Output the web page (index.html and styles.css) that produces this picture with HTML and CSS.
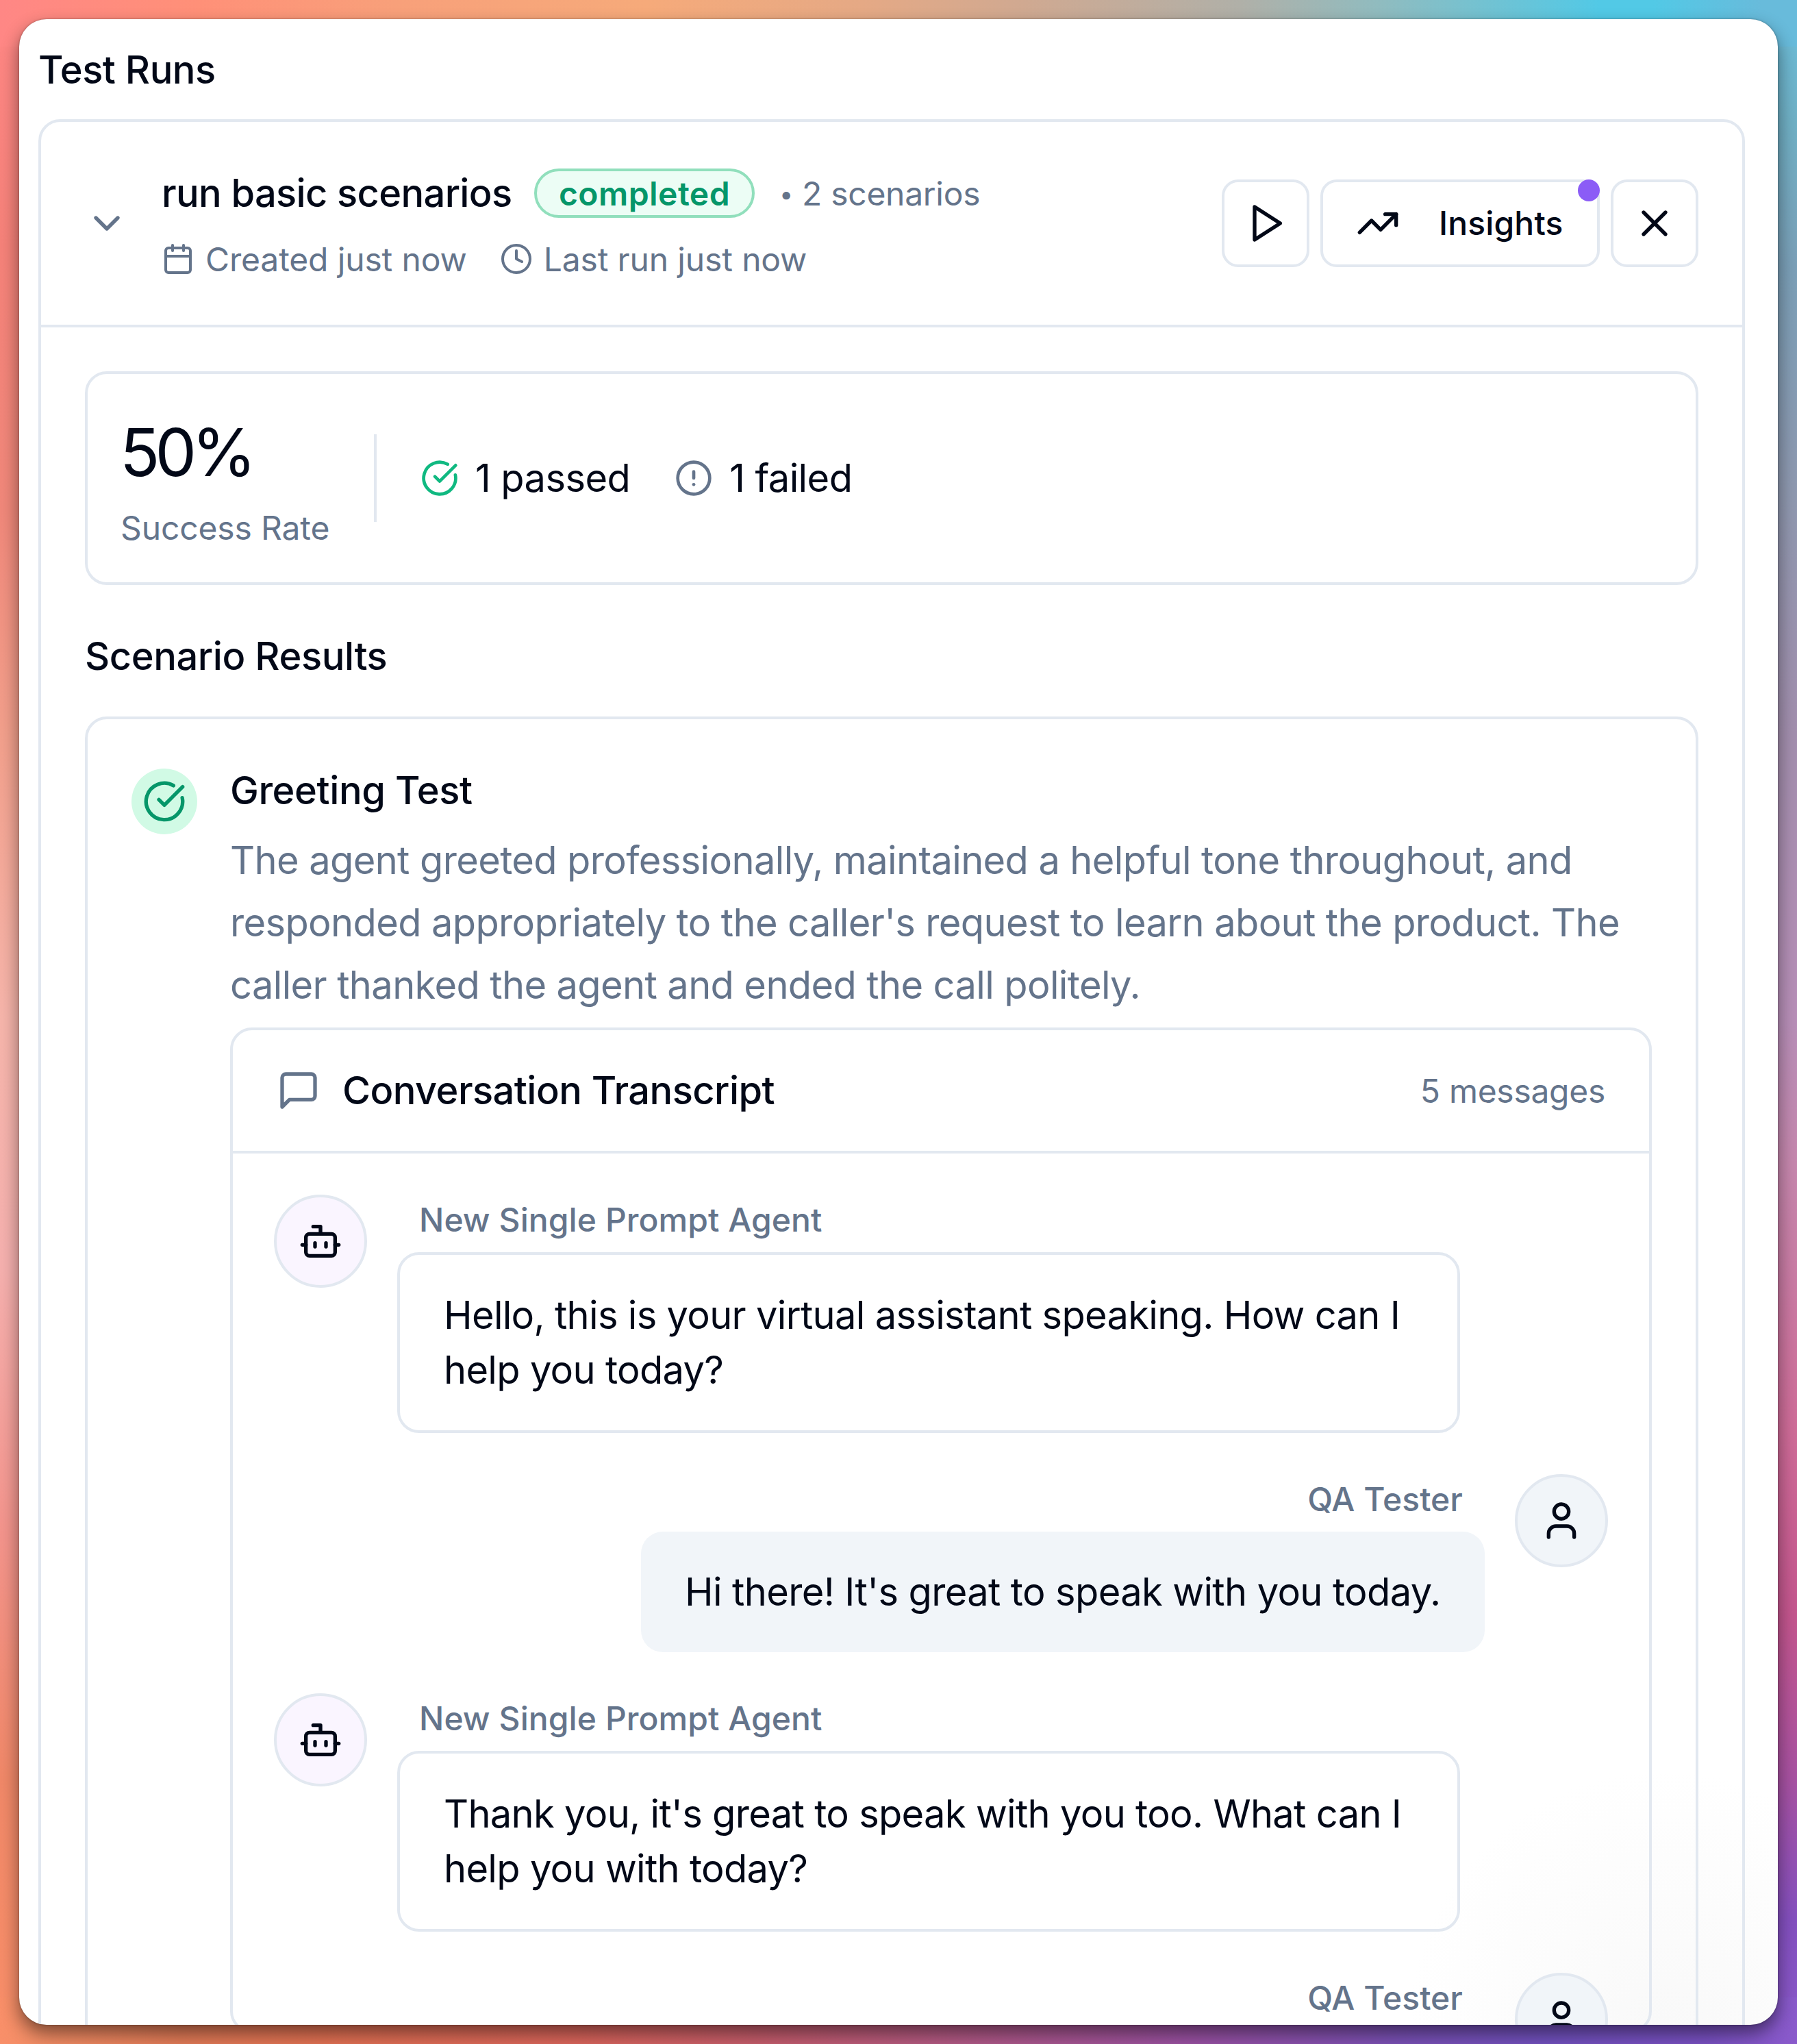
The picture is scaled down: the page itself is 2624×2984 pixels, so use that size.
FILE: index.html
```html
<!DOCTYPE html>
<html lang="en">
<head>
<meta charset="utf-8">
<title>Test Runs</title>
<link rel="stylesheet" href="styles.css">
</head>
<body>
<svg class="sprite" aria-hidden="true">
  <symbol id="chevron-down" viewBox="0 0 24 24"><path d="m6 9 6 6 6-6"/></symbol>
  <symbol id="calendar" viewBox="0 0 24 24"><path d="M8 2v4"/><path d="M16 2v4"/><rect width="18" height="18" x="3" y="4" rx="2"/><path d="M3 10h18"/></symbol>
  <symbol id="clock" viewBox="0 0 24 24"><circle cx="12" cy="12" r="10"/><path d="M12 6v6l4 2"/></symbol>
  <symbol id="play" viewBox="0 0 24 24"><path d="M6 3 20 12 6 21Z"/></symbol>
  <symbol id="trending-up" viewBox="0 0 24 24"><path d="M22 7 13.5 15.5 8.5 10.5 2 17"/><path d="M16 7h6v6"/></symbol>
  <symbol id="x" viewBox="0 0 24 24"><path d="M18 6 6 18"/><path d="m6 6 12 12"/></symbol>
  <symbol id="circle-check" viewBox="0 0 24 24"><path d="M21.801 10A10 10 0 1 1 17 3.335"/><path d="m9 11 3 3L22 4"/></symbol>
  <symbol id="circle-alert" viewBox="0 0 24 24"><circle cx="12" cy="12" r="10"/><path d="M12 8v4"/><path d="M12 16h.01"/></symbol>
  <symbol id="message-square" viewBox="0 0 24 24"><path d="M21 15a2 2 0 0 1-2 2H7l-4 4V5a2 2 0 0 1 2-2h14a2 2 0 0 1 2 2z"/></symbol>
  <symbol id="bot" viewBox="0 0 24 24"><path d="M12 8V4H8"/><rect width="16" height="12" x="4" y="8" rx="2"/><path d="M2 14h2"/><path d="M20 14h2"/><path d="M15 13v2"/><path d="M9 13v2"/></symbol>
  <symbol id="user" viewBox="0 0 24 24"><path d="M19 21v-2a4 4 0 0 0-4-4H9a4 4 0 0 0-4 4v2"/><circle cx="12" cy="7" r="4"/></symbol>
</svg>

<main class="window">
  <h1 class="page-title">Test Runs</h1>

  <section class="run">
    <header class="run-header">
      <svg class="icon muted"><use href="#chevron-down"/></svg>
      <div class="run-info">
        <div class="run-line">
          <h2 class="run-name">run basic scenarios</h2>
          <span class="badge">completed</span>
          <span class="run-count"><span class="bullet">•</span>2 scenarios</span>
        </div>
        <div class="run-meta">
          <span class="meta"><svg class="icon icon-sm"><use href="#calendar"/></svg>Created just now</span>
          <span class="meta"><svg class="icon icon-sm"><use href="#clock"/></svg>Last run just now</span>
        </div>
      </div>
      <div class="actions">
        <button class="button"><svg class="icon"><use href="#play"/></svg></button>
        <button class="button button-wide"><svg class="icon"><use href="#trending-up"/></svg>Insights<span class="dot"></span></button>
        <button class="button"><svg class="icon"><use href="#x"/></svg></button>
      </div>
    </header>

    <div class="run-body">
      <div class="stats">
        <div class="rate">
          <div class="rate-value">50%</div>
          <div class="rate-label">Success Rate</div>
        </div>
        <div class="divider"></div>
        <div class="counts">
          <div class="count"><svg class="icon icon-md passed"><use href="#circle-check"/></svg>1 passed</div>
          <div class="count"><svg class="icon icon-md muted"><use href="#circle-alert"/></svg>1 failed</div>
        </div>
      </div>

      <h3 class="section-title">Scenario Results</h3>

      <article class="result">
        <div class="status"><svg class="icon"><use href="#circle-check"/></svg></div>
        <div class="result-body">
          <h4 class="result-title">Greeting Test</h4>
          <p class="result-text">The agent greeted professionally, maintained a helpful tone throughout, and<br>responded appropriately to the caller's request to learn about the product. The<br>caller thanked the agent and ended the call politely.</p>

          <section class="transcript">
            <header class="transcript-header">
              <svg class="icon muted"><use href="#message-square"/></svg>
              <h5 class="transcript-title">Conversation Transcript</h5>
              <span class="transcript-count">5 messages</span>
            </header>
            <div class="messages">
              <div class="message">
                <div class="avatar agent"><svg class="icon"><use href="#bot"/></svg></div>
                <div class="content">
                  <div class="author">New Single Prompt Agent</div>
                  <div class="bubble">Hello, this is your virtual assistant speaking. How can I<br>help you today?</div>
                </div>
              </div>
              <div class="message own">
                <div class="avatar"><svg class="icon"><use href="#user"/></svg></div>
                <div class="content">
                  <div class="author">QA Tester</div>
                  <div class="bubble">Hi there! It's great to speak with you today.</div>
                </div>
              </div>
              <div class="message">
                <div class="avatar agent"><svg class="icon"><use href="#bot"/></svg></div>
                <div class="content">
                  <div class="author">New Single Prompt Agent</div>
                  <div class="bubble">Thank you, it's great to speak with you too. What can I<br>help you with today?</div>
                </div>
              </div>
              <div class="message own">
                <div class="avatar"><svg class="icon"><use href="#user"/></svg></div>
                <div class="content">
                  <div class="author">QA Tester</div>
                </div>
              </div>
            </div>
          </section>
        </div>
      </article>
    </div>
  </section>
</main>
</body>
</html>
```
FILE: styles.css
```css
* { box-sizing: border-box; }

html, body { height: 2984px; margin: 0; overflow: hidden; }

body {
  padding: 28px;
  font-family: Inter, "Liberation Sans", sans-serif;
  font-size: 56px;
  font-weight: 400;
  line-height: 80px;
  color: #020817;
  background:
    linear-gradient(90deg, #ff8785 0, #ff9078 11%, #f8a07a 22%, #f6aa7a 36%, #e5a985 48%, #d0a991 57%, #b0b0a8 69%, #8fbcc0 77%, #52c9e6 89%, #52c9e6 92%, #68bbdb 98%) 0 0 / 100% 68px no-repeat,
    linear-gradient(90deg, #f98f69 0, #f08c64 2%, #e07a56 10%, #e07052 18%, #d8645a 32%, #c45c6a 42%, #b05882 53%, #9850a0 66%, #7850b4 78%, #7050bc 86%, #7850c0 95%, #8a5acb 100%) 0 100% / 100% 68px no-repeat,
    linear-gradient(180deg, #ff8785 0, #f58279 12%, #f0887a 25%, #f2a08c 36%, #f6b5ab 50%, #f5b0ae 62%, #f3948c 75%, #f08868 87%, #f98f69 100%) 0 0 / 28px 100% no-repeat,
    linear-gradient(180deg, #6bbfdc 0, #70b0c5 6%, #7ba0b8 13%, #8f99b0 24%, #a38fae 36%, #b88fb8 50%, #c687ad 57%, #cf6c98 70%, #c4568e 79%, #a852a2 87%, #8450c0 94%, #8a5acb 100%) 100% 0 / 28px 100% no-repeat;
}

h1, h2, h3, h4, h5, p { margin: 0; font-size: 56px; font-weight: 500; }

.sprite { display: none; }

.icon {
  flex: none;
  width: 64px;
  height: 64px;
  fill: none;
  stroke: currentColor;
  stroke-width: 2;
  stroke-linecap: round;
  stroke-linejoin: round;
}
.icon-sm { width: 48px; height: 48px; margin-top: -2px; }
.icon-md { width: 56px; height: 56px; }
.muted { color: #64748b; }
.passed { color: #10b981; }

.window {
  height: 2928px;
  padding: 34px 48px 0 28px;
  overflow: hidden;
  border-radius: 40px;
  background: radial-gradient(circle 370px at 2400px 2928px, #f9f9f9, #fff) #fff;
  box-shadow: 0 12px 26px rgba(0, 0, 0, .48), 0 0 3px rgba(0, 0, 0, .35);
}

.page-title { letter-spacing: -.0085em; }

.run {
  margin-top: 32px;
  border: 4px solid #e2e8f0;
  border-radius: 32px;
}

.run-header {
  display: flex;
  align-items: center;
  gap: 48px;
  padding: 64px;
  border-bottom: 4px solid #e2e8f0;
}
.run-info { flex: 1; }
.run-line { display: flex; align-items: center; gap: 32px; }
.run-name { width: 512px; white-space: nowrap; letter-spacing: -.0115em; }
.badge {
  width: 322px;
  padding: 1px 0 0;
  border: 4px solid #91dfbc;
  border-radius: 36px;
  background: #ecfdf5;
  color: #059669;
  font-size: 48px;
  font-weight: 600;
  line-height: 63px;
  letter-spacing: .0095em;
  text-align: center;
}
.run-count { display: flex; gap: 14px; padding: 2px 0 0 1px; color: #64748b; font-size: 48px; line-height: 64px; letter-spacing: -.006em; }
.bullet { width: 22px; padding-left: 3px; font-size: 36px; }
.run-meta { display: flex; gap: 48px; margin-top: 24px; color: #64748b; font-size: 48px; line-height: 64px; letter-spacing: -.003em; }
.meta { display: flex; align-items: center; gap: 16px; padding-top: 1px; margin-bottom: -1px; }

.actions { display: flex; gap: 16px; }
.button {
  position: relative;
  display: flex;
  align-items: center;
  justify-content: center;
  width: 128px;
  height: 128px;
  padding: 0;
  border: 4px solid #e2e8f0;
  border-radius: 24px;
  background: #fff;
  color: inherit;
  font: 500 48px/64px Inter, "Liberation Sans", sans-serif;
}
.button-wide { gap: 57px; justify-content: flex-start; width: 408px; padding: 0 0 0 48px; letter-spacing: .003em; }
.dot {
  position: absolute;
  top: -4px;
  right: -4px;
  width: 32px;
  height: 32px;
  border-radius: 50%;
  background: #8b5cf6;
}

.run-body { padding: 64px; }

.stats {
  display: flex;
  align-items: center;
  gap: 64px;
  padding: 48px;
  border: 4px solid #e2e8f0;
  border-radius: 32px;
}
.rate { width: 306px; white-space: nowrap; }
.rate-value { margin-left: -1px; padding-top: 2px; font-size: 96px; line-height: 128px; letter-spacing: -.072em; }
.rate-label { margin: 15px 0 -1px; color: #64748b; font-size: 48px; line-height: 64px; letter-spacing: -.003em; }
.divider { width: 4px; height: 128px; background: #e2e8f0; }
.counts { display: flex; gap: 65px; }
.count { display: flex; align-items: center; gap: 24px; letter-spacing: -.0105em; }

.section-title { margin: 64px 0 48px; letter-spacing: -.0075em; }

.result {
  display: flex;
  align-items: flex-start;
  gap: 48px;
  padding: 64px;
  border: 4px solid #e2e8f0;
  border-radius: 32px;
}
.status {
  display: flex;
  align-items: center;
  justify-content: center;
  width: 96px;
  height: 96px;
  margin-top: 8px;
  border-radius: 50%;
  background: #d1fae5;
  color: #059669;
}
.result-body { flex: 1; }
.result-title { letter-spacing: -.0075em; }
.result-text {
  margin: 17px 0 16px;
  color: #64748b;
  font-weight: 400;
  line-height: 91px;
  letter-spacing: -.0113em;
  white-space: nowrap;
}

.transcript { border: 4px solid #e2e8f0; border-radius: 32px; overflow: hidden; }
.transcript-header {
  display: flex;
  align-items: center;
  gap: 32px;
  padding: 48px 64px;
  border-bottom: 4px solid #e2e8f0;
}
.transcript-title { flex: 1; letter-spacing: -.01em; }
.transcript-count { padding-top: 1px; color: #64748b; font-size: 48px; line-height: 64px; letter-spacing: -.006em; }

.messages {
  display: flex;
  flex-direction: column;
  gap: 60px;
  height: 1280px;
  padding: 60px;
  overflow: hidden;
}
.message { display: flex; flex: none; align-items: flex-start; gap: 44px; }
.own { flex-direction: row-reverse; }
.avatar {
  display: flex;
  flex: none;
  align-items: center;
  justify-content: center;
  width: 136px;
  height: 136px;
  border: 4px solid #e2e8f0;
  border-radius: 50%;
  background: #f1f5f9;
}
.agent { background: #faf5ff; }
.content { display: flex; flex-direction: column; gap: 15px; width: 1552px; padding-top: 5px; }
.own .content { align-items: flex-end; }
.author { padding: 0 32px; color: #64748b; font-size: 48px; font-weight: 500; line-height: 64px; letter-spacing: .0015em; }
.bubble {
  padding: 48px 64px;
  border: 4px solid #e2e8f0;
  border-radius: 32px;
  letter-spacing: -.0124em;
  white-space: nowrap;
}
.own .bubble { width: 1232px; border: 0; background: #f1f5f9; letter-spacing: -.0113em; }
```
